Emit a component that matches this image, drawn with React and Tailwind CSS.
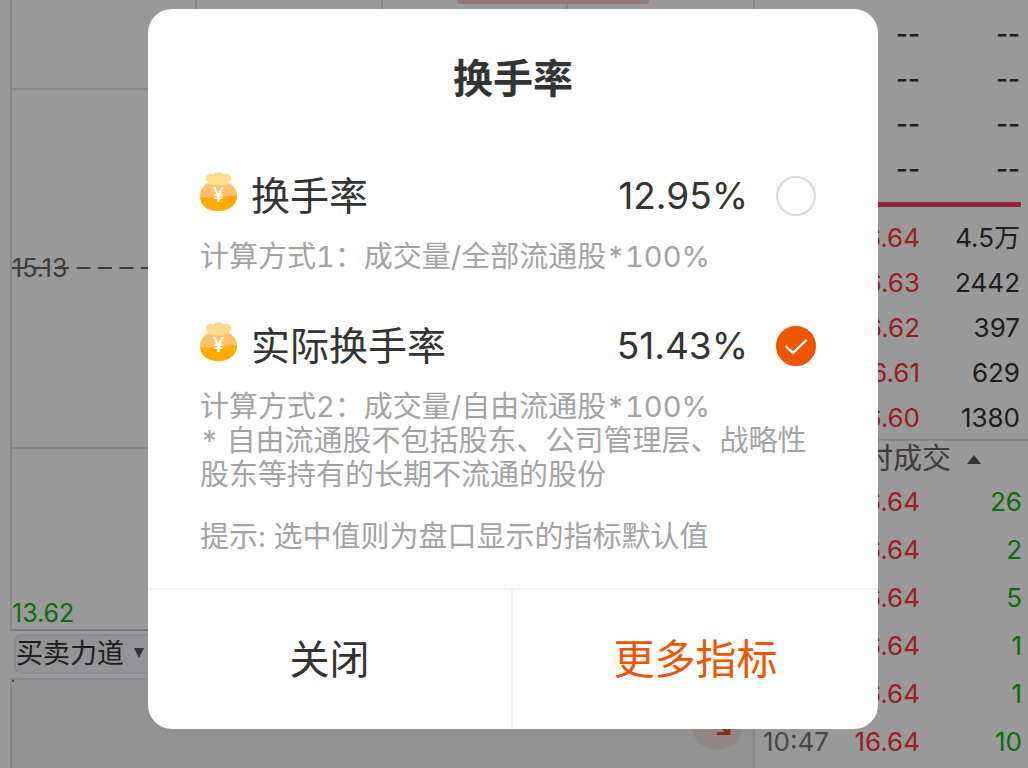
import { useState } from "react";

const emptyQuotes = ["a", "b", "c", "d"];

const buyQuotes = [
  { price: "16.64", volume: "4.5万" },
  { price: "16.63", volume: "2442" },
  { price: "16.62", volume: "397" },
  { price: "16.61", volume: "629" },
  { price: "16.60", volume: "1380" },
];

const trades = [
  { time: "", price: "16.64", volume: "26" },
  { time: "", price: "16.64", volume: "2" },
  { time: "", price: "16.64", volume: "5" },
  { time: "", price: "16.64", volume: "1" },
  { time: "", price: "16.64", volume: "1" },
  { time: "10:47", price: "16.64", volume: "10" },
];

function MoneyBag() {
  return (
    <svg viewBox="0 0 37 39" className="mb-2.5 h-[39px] w-[37px] shrink-0" aria-hidden="true">
      <path d="M8 11C3 14 0 18.500 0 23.500 0 32.500 7.500 39 18.500 39S37 32.500 37 23.500c0-5-3-9.500-8-12.500z" fill="#ffc069" />
      <path d="M.200 25.500C6 25.500 12 25.800 18.500 25.200S31 23.300 37 23.300C37.200 32.500 29.500 39 18.500 39S.700 34 .200 25.500z" fill="#ffab00" />
      <path d="M9 12.500c-1.500-1-1.200-2.200-.5-2.800C5.500 9 5 5.500 6.800 3.500 8.500 1.600 11.500 1.500 13.500 2.500 15 -.300 21.500-.800 23.500 2.500c2-1 5-.900 6.700 1C32 5.500 31.500 9 28.500 9.700c.7.600 1 1.800-.5 2.800-5 1.600-14 1.600-19 0z" fill="#ffd98c" />
      <text x="18.500" y="29.500" textAnchor="middle" fontSize="20" fontWeight="500" fontFamily="Inter, sans-serif" fill="#fff">¥</text>
    </svg>
  );
}

function Option({ id, label, value, checked, onSelect, className, children }) {
  return (
    <section className={className}>
      <label htmlFor={id} className="flex h-12 cursor-pointer items-center pr-2.5 text-[#333]">
        <MoneyBag />
        <span className="ml-3.5 grow text-[39px]">{label}</span>
        <span className="text-[37px]">{value}</span>
        <span className="relative ml-7 size-10 shrink-0">
          <input
            id={id}
            type="radio"
            name="indicator"
            checked={checked}
            onChange={onSelect}
            className="block size-10 appearance-none rounded-full border-2 border-[#d9d9d9] bg-white checked:border-[#ee5500] checked:bg-[#ee5500]"
          />
          {checked && (
            <svg viewBox="0 0 40 40" className="pointer-events-none absolute inset-0 size-10" fill="none" stroke="#fff" strokeWidth="2.400" strokeLinecap="round" strokeLinejoin="round" aria-hidden="true">
              <path d="M10.500 20.800 17 26.800 30 14.500" />
            </svg>
          )}
        </span>
      </label>
      <div className="mt-5 text-[29px] leading-[34px] text-[#a3a3a3] tabular-nums">{children}</div>
    </section>
  );
}

function GridRow({ className }) {
  return (
    <div className={`grid grid-cols-4 border-b-2 border-[#e2e3ea] ${className}`}>
      <span className="border-r-2 border-[#e2e3ea]" />
      <span className="border-r-2 border-[#e2e3ea]" />
      <span className="border-r-2 border-[#e2e3ea]" />
      <span />
    </div>
  );
}

function Chart() {
  return (
    <section className="flex min-w-0 grow flex-col pl-2.5">
      <div className="relative border-l-2 border-[#e2e3ea]">
        <GridRow className="h-[90px]" />
        <div className="h-[359px] border-b-2 border-[#e2e3ea]" />
        <div className="h-[182px] border-b-2 border-[#c8c9d0]" />
        <span className="absolute top-0 left-[60%] h-1 w-48 rounded-b-lg bg-[#f4cccc]" />
        <span className="absolute top-[254px] left-0 text-[25px] leading-7 text-[#666]">15.13</span>
        <svg className="absolute top-[267px] left-0 h-0.5 w-full" aria-hidden="true">
          <line x1="0" y1="1" x2="100%" y2="1" stroke="#666" strokeWidth="2" strokeDasharray="14 7.500" />
        </svg>
        <span className="absolute bottom-1 left-0 text-[25px] leading-7 text-[#0dba0d]">13.62</span>
      </div>
      <div className="relative mt-[3px] ml-1 w-40">
        <select aria-label="指标" className="block h-10 w-full appearance-none rounded-lg border-2 border-[#e6e7ee] bg-[#f5f6fa] text-[27px] leading-9 text-[#333]">
          <option>买卖力道</option>
        </select>
        <svg viewBox="0 0 10 10" className="pointer-events-none absolute top-3.5 left-[120px] size-2.5" aria-hidden="true">
          <path d="M0 0h10L5 10z" fill="#555" />
        </svg>
      </div>
      <div className="relative mt-1 grow border-t-2 border-l-2 border-[#e2e3ea] bg-[#f3f3f3]">
        <span className="absolute top-0 left-0 size-0.5 bg-[#ee464a]" />
        <div className="absolute right-2.5 bottom-[18px] size-[52px] rounded-full bg-[#f0e2dd]">
          <svg viewBox="0 0 52 52" className="size-full" fill="none" stroke="#e0520f" strokeWidth="3" aria-hidden="true">
            <path d="M26 24 36 34M26 35.500h12V25" />
          </svg>
        </div>
      </div>
    </section>
  );
}

function OrderBook() {
  return (
    <aside className="w-[275px] shrink-0 border-l-2 border-[#e2e3ea] text-[26px] text-[#333]">
      <table className="mt-[11px] w-full table-fixed text-right font-medium">
        <tbody>
          {emptyQuotes.map((key) => (
            <tr key={key} className="h-[45px]">
              <td className="w-[165px] p-0">--</td>
              <td className="p-0 pr-2">--</td>
            </tr>
          ))}
        </tbody>
      </table>
      <div className="mt-[11px] mr-[7px] h-[5px] bg-[#ee464a]" />
      <table className="mt-2 w-full table-fixed border-b-2 border-[#e2e3ea] text-right">
        <tbody>
          {buyQuotes.map((q) => (
            <tr key={q.price} className="h-[45px]">
              <td className="w-[165px] p-0 text-[#ff3338]">{q.price}</td>
              <td className="p-0 pr-2">{q.volume}</td>
            </tr>
          ))}
        </tbody>
      </table>
      <div className="flex h-9 items-center pl-[80px] text-[29px] text-[#666]">
        分时成交
        <svg viewBox="0 0 14 9" className="ml-4 h-[9px] w-3.5" aria-hidden="true">
          <path d="M7 0l7 9H0z" fill="#555" />
        </svg>
      </div>
      <table className="w-full table-fixed text-right">
        <tbody>
          {trades.map((t, i) => (
            <tr key={i} className="h-12">
              <td className="w-20 p-0 pl-2 text-left text-[#777]">{t.time}</td>
              <td className="w-[85px] p-0 text-[#ff3338]">{t.price}</td>
              <td className="p-0 pr-1.5 text-[#0dba0d]">{t.volume}</td>
            </tr>
          ))}
        </tbody>
      </table>
    </aside>
  );
}

export default function App() {
  const [choice, setChoice] = useState("actual");

  return (
    <div className="relative min-h-screen overflow-hidden bg-white font-['Inter','Noto_Sans_CJK_SC',sans-serif]">
      <main className="flex min-h-screen">
        <Chart />
        <OrderBook />
      </main>

      <div className="absolute inset-0 flex items-start justify-center bg-black/40 pt-[9px] pr-0.5">
        <div role="dialog" aria-modal="true" aria-labelledby="dialog-title" className="w-full max-w-[730px] rounded-3xl bg-white">
          <div className="px-[52px] pt-10 pb-[34px]">
            <h2 id="dialog-title" className="text-center text-[40px] leading-[60px] font-bold text-[#333]">换手率</h2>
            <Option
              id="turnover"
              label="换手率"
              value="12.95%"
              checked={choice === "turnover"}
              onSelect={() => setChoice("turnover")}
              className="mt-[63px]"
            >
              <p>计算方式1：成交量/全部流通股*100%</p>
            </Option>
            <Option
              id="actual"
              label="实际换手率"
              value="51.43%"
              checked={choice === "actual"}
              onSelect={() => setChoice("actual")}
              className="mt-12"
            >
              <p>计算方式2：成交量/自由流通股*100%</p>
              <p>* 自由流通股不包括股东、公司管理层、战略性股东等持有的长期不流通的股份</p>
              <p className="mt-7">提示: 选中值则为盘口显示的指标默认值</p>
            </Option>
          </div>
          <div className="grid h-[141px] grid-cols-2 border-t-2 border-[#f1f1f1] text-[40px]">
            <button type="button" className="border-r-2 border-[#f1f1f1] text-[#333]">关闭</button>
            <button type="button" className="text-[41px] text-[#ee5500]">更多指标</button>
          </div>
        </div>
      </div>
    </div>
  );
}
